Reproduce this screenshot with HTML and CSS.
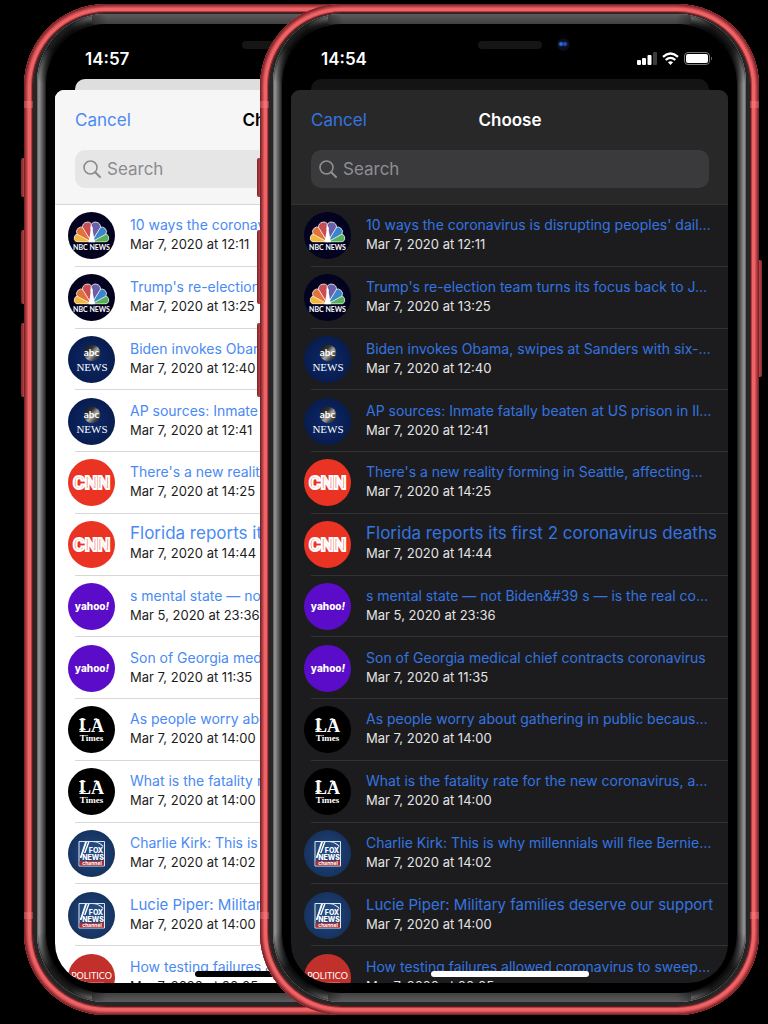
FILE: index.html
```html
<!DOCTYPE html>
<html lang="en">
<head>
<meta charset="utf-8">
<meta name="viewport" content="width=device-width, initial-scale=1">
<title>Choose</title>
<link rel="stylesheet" href="styles.css">
</head>
<body>
<svg class="defs" width="0" height="0" aria-hidden="true">
  <defs>
    <radialGradient id="abc-sky"><stop offset="0" stop-color="#0d2a6b"/><stop offset="1" stop-color="#081c4e"/></radialGradient>
    <linearGradient id="abc-ball" x1="0" y1="0" x2="1" y2="1"><stop offset="0" stop-color="#111"/><stop offset=".35" stop-color="#333"/><stop offset=".55" stop-color="#aaa"/><stop offset=".75" stop-color="#444"/><stop offset="1" stop-color="#111"/></linearGradient>
    <radialGradient id="fox-sky"><stop offset="0" stop-color="#1d4a85"/><stop offset="1" stop-color="#17325e"/></radialGradient>
    <path id="feather" d="M0 0L-4.6 -15.5A4.7 4.7 0 0 1 4.6 -15.5Z"/>
  </defs>
  <symbol id="nbc" viewBox="0 0 47 47">
    <circle cx="23.5" cy="23.5" r="23.5" fill="#03031f"/>
    <g stroke="#fff" stroke-width=".7" transform="translate(23.5 30)">
      <use href="#feather" fill="#f3b73e" transform="rotate(-73) scale(.93)"/>
      <use href="#feather" fill="#58b158" transform="rotate(73) scale(.93)"/>
      <use href="#feather" fill="#e2723a" transform="rotate(-45)"/>
      <use href="#feather" fill="#3b86cb" transform="rotate(45)"/>
      <use href="#feather" fill="#c94d52" transform="rotate(-15) scale(1.06)"/>
      <use href="#feather" fill="#6a60a9" transform="rotate(15) scale(1.06)"/>
    </g>
    <path d="M23.5 13q1.600 2 1.300 6l2.200 11.500h-6.500l2.200-12q-.5-3 .8-5.500z" fill="#fff"/>
    <path d="M3 30.500h41v1H3z" fill="#03031f"/>
  </symbol>
  <symbol id="abc" viewBox="0 0 47 47">
    <circle cx="23.5" cy="23.5" r="23.5" fill="url(#abc-sky)"/>
    <circle cx="24" cy="17" r="8.300" fill="url(#abc-ball)"/>
  </symbol>
  <symbol id="cnn" viewBox="0 0 47 47"><circle cx="23.5" cy="23.5" r="23.5" fill="#ea3323"/></symbol>
  <symbol id="yahoo" viewBox="0 0 47 47"><circle cx="23.5" cy="23.5" r="23.5" fill="#5a0cc8"/></symbol>
  <symbol id="lat" viewBox="0 0 47 47">
    <circle cx="23.5" cy="23.5" r="23.5" fill="#000"/>
    <path d="M12 14q2.500-2.500 5 0M11.500 24q3-3 6 0M26 14q2-2 4 0" fill="none" stroke="#fff" stroke-width="1.300"/>
  </symbol>
  <symbol id="fox" viewBox="0 0 47 47">
    <circle cx="23.5" cy="23.5" r="23.5" fill="url(#fox-sky)"/>
    <path d="M11 11.500h25.500v24.500H11z" fill="#234a80" stroke="#dfe6ef" stroke-width="1"/>
    <path d="M12 27L17 12h2L13.500 28H12zM16 23l4-11h1.500l-4 11zM24 12q7 0 11 5l.5-1q-4-4-8-4z" fill="#fff"/>
    <path d="M11.500 31h24.500v4.500H11.500z" fill="#b92b2b"/>
  </symbol>
  <symbol id="politico" viewBox="0 0 47 47">
    <circle cx="23.5" cy="23.5" r="23.5" fill="#c1302b"/>
    <path d="M11 28.500h25" stroke="#dd6a62" stroke-width=".8"/>
  </symbol>
  <symbol id="lens" viewBox="0 0 18 18">
    <circle cx="7.500" cy="7.500" r="6.500" fill="none" stroke="currentColor" stroke-width="1.600"/>
    <path d="M12.200 12.200L17 17" stroke="currentColor" stroke-width="2" stroke-linecap="round"/>
  </symbol>
</svg>

<main class="stage">
  <section class="phone phone-light" aria-label="Light appearance">
    <span class="key key-mute"></span><span class="key key-up"></span><span class="key key-down"></span><span class="key key-side"></span>
    <div class="band"><div class="rim"><div class="bevel"><div class="bezel"><div class="screen">
      <div class="status"><time>14:57</time><span class="speaker"></span><span class="camera"></span></div>
      <div class="back-card"></div>
      <div class="sheet">
        <header class="bar">
          <div class="nav"><button type="button">Cancel</button><h1>Choose</h1></div>
          <label class="search"><svg width="18" height="18" aria-hidden="true"><use href="#lens"/></svg><input type="search" placeholder="Search" aria-label="Search"></label>
        </header>
        <ul class="list">
          <li><svg class="logo" viewBox="0 0 47 47"><use href="#nbc"/><text x="23.5" y="38" class="logo-nbc">NBC NEWS</text></svg><div class="item"><a href="#">10 ways the coronavirus is disrupting peoples' dail…</a><time>Mar 7, 2020 at 12:11</time></div></li>
          <li><svg class="logo" viewBox="0 0 47 47"><use href="#nbc"/><text x="23.5" y="38" class="logo-nbc">NBC NEWS</text></svg><div class="item"><a href="#">Trump's re-election team turns its focus back to J…</a><time>Mar 7, 2020 at 13:25</time></div></li>
          <li><svg class="logo" viewBox="0 0 47 47"><use href="#abc"/><text x="23.5" y="20" class="logo-abc">abc</text><text x="24" y="35" class="logo-abc-news">NEWS</text></svg><div class="item"><a href="#">Biden invokes Obama, swipes at Sanders with six-…</a><time>Mar 7, 2020 at 12:40</time></div></li>
          <li><svg class="logo" viewBox="0 0 47 47"><use href="#abc"/><text x="23.5" y="20" class="logo-abc">abc</text><text x="24" y="35" class="logo-abc-news">NEWS</text></svg><div class="item"><a href="#">AP sources: Inmate fatally beaten at US prison in Il…</a><time>Mar 7, 2020 at 12:41</time></div></li>
          <li><svg class="logo" viewBox="0 0 47 47"><use href="#cnn"/><text x="23.5" y="30" class="logo-cnn">CNN</text></svg><div class="item"><a href="#">There's a new reality forming in Seattle, affecting…</a><time>Mar 7, 2020 at 14:25</time></div></li>
          <li><svg class="logo" viewBox="0 0 47 47"><use href="#cnn"/><text x="23.5" y="30" class="logo-cnn">CNN</text></svg><div class="item"><a href="#" class="large">Florida reports its first 2 coronavirus deaths</a><time>Mar 7, 2020 at 14:44</time></div></li>
          <li><svg class="logo" viewBox="0 0 47 47"><use href="#yahoo"/><text x="24" y="27" class="logo-yahoo">yahoo<tspan font-style="italic">!</tspan></text></svg><div class="item"><a href="#">s mental state — not Biden&amp;#39 s — is the real co…</a><time>Mar 5, 2020 at 23:36</time></div></li>
          <li><svg class="logo" viewBox="0 0 47 47"><use href="#yahoo"/><text x="24" y="27" class="logo-yahoo">yahoo<tspan font-style="italic">!</tspan></text></svg><div class="item"><a href="#">Son of Georgia medical chief contracts coronavirus</a><time>Mar 7, 2020 at 11:35</time></div></li>
          <li><svg class="logo" viewBox="0 0 47 47"><use href="#lat"/><text x="23.5" y="26" class="logo-la">LA</text><text x="23.5" y="35" class="logo-times">Times</text></svg><div class="item"><a href="#">As people worry about gathering in public becaus…</a><time>Mar 7, 2020 at 14:00</time></div></li>
          <li><svg class="logo" viewBox="0 0 47 47"><use href="#lat"/><text x="23.5" y="26" class="logo-la">LA</text><text x="23.5" y="35" class="logo-times">Times</text></svg><div class="item"><a href="#">What is the fatality rate for the new coronavirus, a…</a><time>Mar 7, 2020 at 14:00</time></div></li>
          <li><svg class="logo" viewBox="0 0 47 47"><use href="#fox"/><text x="28" y="23" class="logo-fox">FOX</text><text x="25" y="30" class="logo-fox">NEWS</text><text x="24" y="35" class="logo-channel">channel</text></svg><div class="item"><a href="#">Charlie Kirk: This is why millennials will flee Bernie…</a><time>Mar 7, 2020 at 14:02</time></div></li>
          <li><svg class="logo" viewBox="0 0 47 47"><use href="#fox"/><text x="28" y="23" class="logo-fox">FOX</text><text x="25" y="30" class="logo-fox">NEWS</text><text x="24" y="35" class="logo-channel">channel</text></svg><div class="item"><a href="#" class="medium">Lucie Piper: Military families deserve our support</a><time>Mar 7, 2020 at 14:00</time></div></li>
          <li><svg class="logo" viewBox="0 0 47 47"><use href="#politico"/><text x="23.5" y="25" class="logo-politico">POLITICO</text></svg><div class="item"><a href="#">How testing failures allowed coronavirus to sweep…</a><time>Mar 7, 2020 at 00:05</time></div></li>
        </ul>
      </div>
      <span class="home"></span>
    </div></div></div></div></div>
  </section>

  <section class="phone phone-dark" aria-label="Dark appearance">
    <span class="key key-mute"></span><span class="key key-up"></span><span class="key key-down"></span><span class="key key-side"></span>
    <div class="band"><div class="rim"><div class="bevel"><div class="bezel"><div class="screen">
      <div class="status"><time>14:54</time><span class="speaker"></span><span class="camera"></span>
        <svg class="signals" width="76" height="14" viewBox="0 0 76 14" role="img" aria-label="Signal, Wi-Fi, battery">
          <g fill="#fff"><rect x="0" y="8" width="4" height="5" rx="1"/><rect x="5" y="6" width="4" height="7" rx="1"/><rect x="10.500" y="3" width="4" height="10" rx="1"/></g>
          <rect x="16" y="0" width="4" height="13" rx="1" fill="#3c3c3c"/>
          <g fill="none" stroke="#fff" stroke-width="2.300"><path d="M26 4.800q7.500-6.600 15 0"/><path d="M28.700 8q4.800-4.200 9.600 0"/></g>
          <path d="M30.900 10.300q2.600-2 5.200 0l-2.600 2.700z" fill="#fff"/>
          <rect x="47.500" y=".5" width="25" height="12" rx="3.500" fill="none" stroke="#777"/>
          <rect x="49" y="2" width="22" height="9" rx="2" fill="#fff"/>
          <path d="M74 4.500q2 2 0 4z" fill="#777"/>
        </svg>
      </div>
      <div class="back-card"></div>
      <div class="sheet">
        <header class="bar">
          <div class="nav"><button type="button">Cancel</button><h1>Choose</h1></div>
          <label class="search"><svg width="18" height="18" aria-hidden="true"><use href="#lens"/></svg><input type="search" placeholder="Search" aria-label="Search"></label>
        </header>
        <ul class="list">
          <li><svg class="logo" viewBox="0 0 47 47"><use href="#nbc"/><text x="23.5" y="38" class="logo-nbc">NBC NEWS</text></svg><div class="item"><a href="#">10 ways the coronavirus is disrupting peoples' dail…</a><time>Mar 7, 2020 at 12:11</time></div></li>
          <li><svg class="logo" viewBox="0 0 47 47"><use href="#nbc"/><text x="23.5" y="38" class="logo-nbc">NBC NEWS</text></svg><div class="item"><a href="#">Trump's re-election team turns its focus back to J…</a><time>Mar 7, 2020 at 13:25</time></div></li>
          <li><svg class="logo" viewBox="0 0 47 47"><use href="#abc"/><text x="23.5" y="20" class="logo-abc">abc</text><text x="24" y="35" class="logo-abc-news">NEWS</text></svg><div class="item"><a href="#">Biden invokes Obama, swipes at Sanders with six-…</a><time>Mar 7, 2020 at 12:40</time></div></li>
          <li><svg class="logo" viewBox="0 0 47 47"><use href="#abc"/><text x="23.5" y="20" class="logo-abc">abc</text><text x="24" y="35" class="logo-abc-news">NEWS</text></svg><div class="item"><a href="#">AP sources: Inmate fatally beaten at US prison in Il…</a><time>Mar 7, 2020 at 12:41</time></div></li>
          <li><svg class="logo" viewBox="0 0 47 47"><use href="#cnn"/><text x="23.5" y="30" class="logo-cnn">CNN</text></svg><div class="item"><a href="#">There's a new reality forming in Seattle, affecting…</a><time>Mar 7, 2020 at 14:25</time></div></li>
          <li><svg class="logo" viewBox="0 0 47 47"><use href="#cnn"/><text x="23.5" y="30" class="logo-cnn">CNN</text></svg><div class="item"><a href="#" class="large">Florida reports its first 2 coronavirus deaths</a><time>Mar 7, 2020 at 14:44</time></div></li>
          <li><svg class="logo" viewBox="0 0 47 47"><use href="#yahoo"/><text x="24" y="27" class="logo-yahoo">yahoo<tspan font-style="italic">!</tspan></text></svg><div class="item"><a href="#">s mental state — not Biden&amp;#39 s — is the real co…</a><time>Mar 5, 2020 at 23:36</time></div></li>
          <li><svg class="logo" viewBox="0 0 47 47"><use href="#yahoo"/><text x="24" y="27" class="logo-yahoo">yahoo<tspan font-style="italic">!</tspan></text></svg><div class="item"><a href="#">Son of Georgia medical chief contracts coronavirus</a><time>Mar 7, 2020 at 11:35</time></div></li>
          <li><svg class="logo" viewBox="0 0 47 47"><use href="#lat"/><text x="23.5" y="26" class="logo-la">LA</text><text x="23.5" y="35" class="logo-times">Times</text></svg><div class="item"><a href="#">As people worry about gathering in public becaus…</a><time>Mar 7, 2020 at 14:00</time></div></li>
          <li><svg class="logo" viewBox="0 0 47 47"><use href="#lat"/><text x="23.5" y="26" class="logo-la">LA</text><text x="23.5" y="35" class="logo-times">Times</text></svg><div class="item"><a href="#">What is the fatality rate for the new coronavirus, a…</a><time>Mar 7, 2020 at 14:00</time></div></li>
          <li><svg class="logo" viewBox="0 0 47 47"><use href="#fox"/><text x="28" y="23" class="logo-fox">FOX</text><text x="25" y="30" class="logo-fox">NEWS</text><text x="24" y="35" class="logo-channel">channel</text></svg><div class="item"><a href="#">Charlie Kirk: This is why millennials will flee Bernie…</a><time>Mar 7, 2020 at 14:02</time></div></li>
          <li><svg class="logo" viewBox="0 0 47 47"><use href="#fox"/><text x="28" y="23" class="logo-fox">FOX</text><text x="25" y="30" class="logo-fox">NEWS</text><text x="24" y="35" class="logo-channel">channel</text></svg><div class="item"><a href="#" class="medium">Lucie Piper: Military families deserve our support</a><time>Mar 7, 2020 at 14:00</time></div></li>
          <li><svg class="logo" viewBox="0 0 47 47"><use href="#politico"/><text x="23.5" y="25" class="logo-politico">POLITICO</text></svg><div class="item"><a href="#">How testing failures allowed coronavirus to sweep…</a><time>Mar 7, 2020 at 00:05</time></div></li>
        </ul>
      </div>
      <span class="home"></span>
    </div></div></div></div></div>
  </section>
</main>
</body>
</html>
```
FILE: styles.css
```css
* { box-sizing: border-box; }

body {
  margin: 0;
  background: #000;
  font-family: Inter, "Liberation Sans", sans-serif;
}

.defs { position: absolute; }

.stage {
  display: grid;
  grid-template-columns: 236fr 263fr 236fr;
  height: 100vh;
  min-height: 640px;
  padding: 4px 9px 9px 24px;
}

/* Phone bodies overlap through shared grid columns */
.phone {
  position: relative;
  grid-row: 1;
  min-width: 0;
  min-height: 0;
}
.phone-light {
  grid-column: 1 / 3;
  --bar: #f6f6f6;
  --page: #fff;
  --back: #dedede;
  --field: #e6e6e7;
  --muted: #8c8c90;
  --line: #d8d8da;
  --title: #000;
  --date: #1c1c1c;
  --link: #4a8af4;
  --home: #000;
}
.phone-dark {
  grid-column: 2 / 4;
  --bar: #282828;
  --page: #1c1c1e;
  --back: #141414;
  --field: #3a3a3d;
  --muted: #8e8e93;
  --line: #323235;
  --title: #fff;
  --date: #e4e4e4;
  --link: #3474e0;
  --home: #fff;
}

.key {
  position: absolute;
  left: -3px;
  width: 8px;
  border-radius: 2px;
  background: linear-gradient(90deg, #7a2327, #cf4b50 50%, #8a2a2e);
}
.key-mute { top: 154px; height: 39px; }
.key-up { top: 226px; height: 74px; }
.key-down { top: 319px; height: 74px; }
.key-side {
  top: 256px;
  right: -3px;
  left: auto;
  height: 117px;
}

.band, .rim, .bevel, .bezel { position: relative; height: 100%; }

.band {
  padding: 9px;
  border-radius: 82px;
  background: #a83a3e;
  box-shadow:
    inset 0 0 0 1px #7a2327,
    inset 0 0 0 2px #9a3236,
    inset 0 0 0 3px #b54145,
    inset 0 0 0 4px #d4535a,
    inset 0 0 0 7px #ee6366,
    inset 0 0 0 8px #b03e42,
    inset 0 0 0 9px #5c1a1d;
}
.band::before {
  content: "";
  position: absolute;
  inset: 97px 0 96px;
  background:
    linear-gradient(#ff8a8c55, #ff8a8c55) top / 100% 7px no-repeat,
    linear-gradient(#ff8a8c55, #ff8a8c55) bottom / 100% 7px no-repeat;
}

.rim {
  padding: 1px 4px 4px;
  border-radius: 73px;
  background: #262626;
}

.bevel {
  padding: 10px 9px 9px;
  border-radius: 69px;
  overflow: hidden;
  background: #333;
  box-shadow:
    inset 0 0 0 1px #6a6a6a,
    inset 0 0 0 3px #8c8c8c,
    inset 0 0 0 4px #7c7c7c,
    inset 0 0 0 5px #6a6a6a,
    inset 0 0 0 6px #585858,
    inset 0 0 0 7px #484848,
    inset 0 0 0 8px #383838,
    inset 0 0 0 9px #222;
}
.bevel::before {
  content: "";
  position: absolute;
  inset: 0;
  background:
    radial-gradient(circle at 20px 20px, #000c 16px, #0000 52px),
    radial-gradient(circle at calc(100% - 20px) 20px, #000c 16px, #0000 52px),
    radial-gradient(circle at 20px calc(100% - 20px), #000c 16px, #0000 52px),
    radial-gradient(circle at calc(100% - 20px) calc(100% - 20px), #000c 16px, #0000 52px),
    linear-gradient(#5c5c5c, #404040) 50% 0 / calc(100% - 110px) 10px no-repeat,
    linear-gradient(#404040, #5c5c5c) 50% 100% / calc(100% - 110px) 9px no-repeat;
}

.bezel {
  padding: 0 9px 10px;
  border-radius: 60px;
  background: #000;
}

.screen {
  position: relative;
  display: flex;
  flex-direction: column;
  height: 100%;
  overflow: hidden;
  border-radius: 40px;
}

.status {
  display: grid;
  grid-template-columns: 1fr auto 1fr;
  align-items: center;
  flex: none;
  height: 55px;
  padding: 14px 15px 0 30px;
  color: #fff;
  font-size: 17px;
  font-weight: 600;
}
.speaker {
  grid-column: 2;
  grid-row: 1;
  align-self: start;
  width: 64px;
  height: 8px;
  margin: 3px 15px 0 0;
  border-radius: 4px;
  background: #151515;
}
.camera {
  position: absolute;
  top: 14px;
  left: calc(50% + 47px);
  width: 13px;
  height: 13px;
  border-radius: 50%;
  background:
    radial-gradient(circle at 4px 6px, #2d6be8 1px, #0000 3px),
    radial-gradient(circle at 8px 6px, #2450c8 1px, #0000 3px),
    #0b0d18;
}
.signals { justify-self: end; }

.back-card {
  flex: none;
  height: 11px;
  margin: 0 19px 0 20px;
  border-radius: 10px 10px 0 0;
  background: var(--back);
}

.sheet {
  display: flex;
  flex: 1;
  flex-direction: column;
  min-height: 0;
  overflow: hidden;
  border-radius: 9px 9px 0 0;
  background: var(--page);
}

.bar {
  flex: none;
  height: 115px;
  padding: 0 19px 0 20px;
  border-bottom: 1px solid var(--line);
  background: var(--bar);
}
.nav {
  display: grid;
  grid-template-columns: 1fr auto 1fr;
  align-items: center;
  height: 60px;
}
.nav button {
  justify-self: start;
  padding: 0;
  border: 0;
  background: none;
  color: var(--link);
  font: 400 17px/24px Inter, "Liberation Sans", sans-serif;
}
.nav h1 {
  margin: 0;
  color: var(--title);
  font-size: 17px;
  font-weight: 600;
  line-height: 24px;
}
.search {
  display: flex;
  align-items: center;
  gap: 6px;
  height: 38px;
  padding: 0 8px;
  border-radius: 10px;
  background: var(--field);
  color: var(--muted);
}
.search input {
  flex: 1;
  min-width: 0;
  padding: 0;
  border: 0;
  outline: 0;
  background: none;
  color: var(--title);
  font: 400 17px/24px Inter, "Liberation Sans", sans-serif;
}
.search input::placeholder { color: var(--muted); opacity: 1; }

.list {
  display: grid;
  flex: none;
  grid-template-rows: repeat(12, 1fr);
  grid-auto-rows: 62px;
  height: 803px;
  margin: 0;
  padding: 0;
  list-style: none;
}
.list li {
  display: flex;
  align-items: center;
  gap: 15px;
  min-height: 0;
  padding: 0 0 0 13px;
  background: linear-gradient(var(--line), var(--line)) 20px 100% / 100% 1px no-repeat;
}
.logo {
  flex: none;
  width: 47px;
  height: 47px;
}
.item {
  flex: 1;
  min-width: 0;
  padding-bottom: 3px;
}
.item a, .item time {
  display: block;
  overflow: hidden;
  white-space: nowrap;
}
.item a {
  color: var(--link);
  font-size: 14px;
  line-height: 21px;
  text-decoration: none;
}
.item a.medium { font-size: 15px; }
.item a.large { font-size: 17px; }
.item time {
  color: var(--date);
  font-size: 13px;
  line-height: 19px;
}

.home {
  position: absolute;
  bottom: 6px;
  left: calc(50% - 79px);
  width: 158px;
  height: 6px;
  border-radius: 3px;
  background: var(--home);
}

/* Publisher marks */
.logo text { fill: #fff; text-anchor: middle; }
.logo-nbc { font: 700 7px Lato, sans-serif; }
.logo-abc { font: 700 10px Lato, sans-serif; }
.logo-abc-news { font: 400 11px "Liberation Serif", serif; }
.logo .logo-cnn {
  fill: #ea3323;
  stroke: #fff;
  stroke-width: 2px;
  font: 700 18px Roboto, sans-serif;
}
.logo-yahoo { font: 800 10px Inter, sans-serif; }
.logo-la { font: 700 18px "Liberation Serif", serif; }
.logo-times { font: 700 9px "Liberation Serif", serif; }
.logo-fox { font: 800 7px Inter, sans-serif; }
.logo-channel { font: 700 5px Inter, sans-serif; }
.logo-politico { font: 400 9px Lato, sans-serif; }
```
